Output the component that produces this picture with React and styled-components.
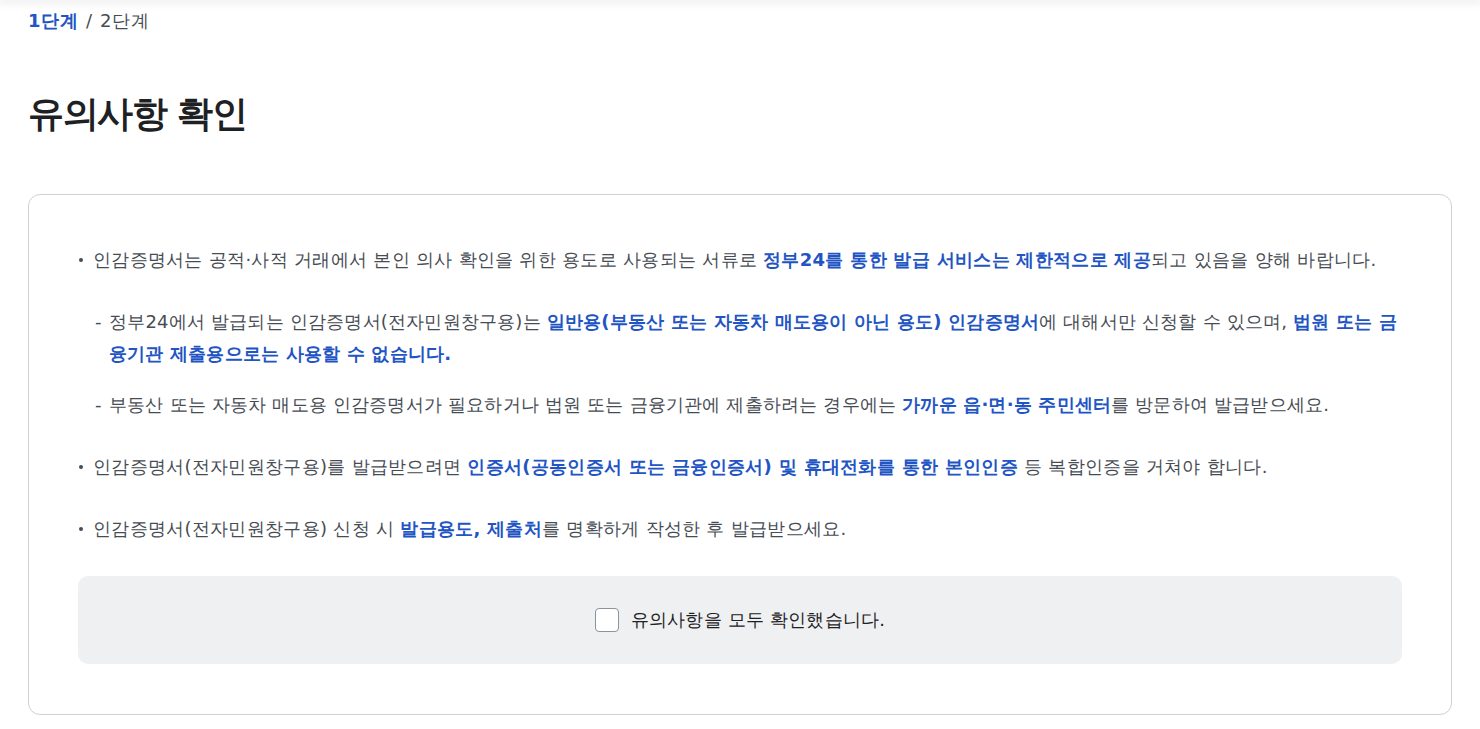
import React, { useState } from "react";
import styled, { createGlobalStyle } from "styled-components";

const GlobalStyle = createGlobalStyle`
  * { box-sizing: border-box; }
  body {
    margin: 0;
    background: #fff;
    font-family: "DejaVu Sans", sans-serif;
    color: #1e2124;
  }
`;

const TopShadow = styled.div`
  height: 0;
  box-shadow: 0 0 8px 2px rgba(0, 0, 0, 0.12);
`;

const Page = styled.main`
  padding: 6px 28px 14px 28px;
`;

const Breadcrumb = styled.nav`
  display: flex;
  align-items: center;
  gap: 8px;
  font-size: 18px;
  line-height: 30px;
  color: #464c53;
`;

const Step = styled.span`
  font-weight: ${(p) => (p.$active ? 700 : 400)};
  color: ${(p) => (p.$active ? "#2255c3" : "#464c53")};
  letter-spacing: 0.5px;
`;

const Title = styled.h1`
  margin: 52px 0 0;
  font-size: 36px;
  line-height: 52px;
  font-weight: 700;
  color: #1e2124;
  letter-spacing: -1.5px;
`;

const Card = styled.section`
  margin-top: 54px;
  border: 1px solid #cdd1d5;
  border-radius: 12px;
  padding: 49px 49px 50px 49px;
`;

const List = styled.ul`
  list-style: none;
  margin: 0;
  padding: 0;
  display: flex;
  flex-direction: column;
  gap: 30px;
`;

const Item = styled.li`
  position: relative;
  padding-left: 15px;
  font-size: 18px;
  line-height: 32px;
  letter-spacing: 0.3px;
  color: #464c53;

  &::before {
    content: "";
    position: absolute;
    left: 1px;
    top: 14px;
    width: 4px;
    height: 4px;
    border-radius: 50%;
    background: #464c53;
  }
`;

const SubList = styled.ul`
  list-style: none;
  margin: 30px 0 0;
  padding: 0;
  display: flex;
  flex-direction: column;
  gap: 19px;
`;

const SubItem = styled.li`
  position: relative;
  padding-left: 16px;
  letter-spacing: 0.2px;

  &::before {
    content: "-";
    position: absolute;
    left: 2px;
    top: 0;
  }
`;

const Em = styled.strong`
  font-weight: 700;
  color: #2255c3;
`;

const ConfirmBox = styled.div`
  margin-top: 31px;
  height: 88px;
  border-radius: 10px;
  background: #eff0f1;
  display: flex;
  align-items: center;
  justify-content: center;
`;

const Label = styled.label`
  display: flex;
  align-items: center;
  gap: 12px;
  font-size: 18px;
  letter-spacing: 0.2px;
  color: #1e2124;
  cursor: pointer;
`;

const Check = styled.input`
  appearance: none;
  margin: 0;
  width: 24px;
  height: 24px;
  border: 1px solid #8a949e;
  border-radius: 4px;
  background: #fff;
  cursor: pointer;

  &:checked {
    background: #2255c3;
    border-color: #2255c3;
  }
`;

export default function App() {
  const [checked, setChecked] = useState(false);
  return (
    <>
      <GlobalStyle />
      <TopShadow />
      <Page>
        <Breadcrumb>
          <Step $active>1단계</Step>
          <span>/</span>
          <Step>2단계</Step>
        </Breadcrumb>
        <Title>유의사항 확인</Title>
        <Card>
          <List>
            <Item>
              인감증명서는 공적·사적 거래에서 본인 의사 확인을 위한 용도로 사용되는 서류로{" "}
              <Em>정부24를 통한 발급 서비스는 제한적으로 제공</Em>되고 있음을 양해 바랍니다.
              <SubList>
                <SubItem>
                  정부24에서 발급되는 인감증명서(전자민원창구용)는{" "}
                  <Em>일반용(부동산 또는 자동차 매도용이 아닌 용도) 인감증명서</Em>에 대해서만
                  신청할 수 있으며, <Em>법원 또는 금융기관 제출용으로는 사용할 수 없습니다.</Em>
                </SubItem>
                <SubItem>
                  부동산 또는 자동차 매도용 인감증명서가 필요하거나 법원 또는 금융기관에
                  제출하려는 경우에는 <Em>가까운 읍·면·동 주민센터</Em>를 방문하여 발급받으세요.
                </SubItem>
              </SubList>
            </Item>
            <Item>
              인감증명서(전자민원창구용)를 발급받으려면{" "}
              <Em>인증서(공동인증서 또는 금융인증서) 및 휴대전화를 통한 본인인증</Em> 등
              복합인증을 거쳐야 합니다.
            </Item>
            <Item>
              인감증명서(전자민원창구용) 신청 시 <Em>발급용도, 제출처</Em>를 명확하게 작성한 후
              발급받으세요.
            </Item>
          </List>
          <ConfirmBox>
            <Label>
              <Check
                type="checkbox"
                checked={checked}
                onChange={(e) => setChecked(e.target.checked)}
              />
              유의사항을 모두 확인했습니다.
            </Label>
          </ConfirmBox>
        </Card>
      </Page>
    </>
  );
}
